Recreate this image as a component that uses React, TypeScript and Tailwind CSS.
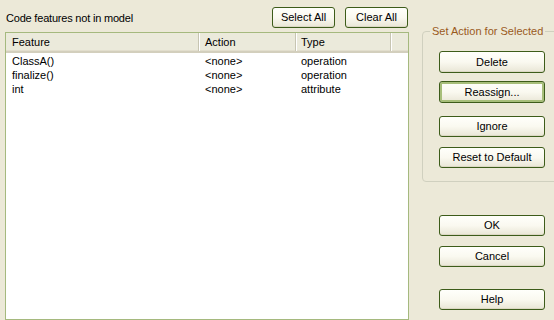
import React from "react";

function XpButton({
  label,
  className = "",
  focused = false,
}: {
  label: string;
  className?: string;
  focused?: boolean;
}) {
  return (
    <button
      className={
        "shrink-0 flex items-center justify-center rounded-[3px] border border-[#3D5C1A] bg-gradient-to-b from-[#FFFFFB] via-[#FAF9F0] to-[#E9E6D6] text-black leading-none " +
        (focused ? "shadow-[inset_0_0_0_2px_#A7BE7A] " : "shadow-[inset_0_-1px_0_#DCD8C4] ") +
        className
      }
    >
      {label}
    </button>
  );
}

const rows = [
  { f: "ClassA()", a: "<none>", t: "operation" },
  { f: "finalize()", a: "<none>", t: "operation" },
  { f: "int", a: "<none>", t: "attribute" },
];

export default function App() {
  return (
    <div className="w-[554px] h-[320px] overflow-hidden bg-[#ECE9D8] flex font-['Liberation_Sans',Arial,sans-serif] text-[11px] text-black">
      {/* Left column */}
      <div className="w-[409px] shrink-0 pl-[5px] flex flex-col">
        <div className="h-[32px] flex items-start">
          <span className="mt-[12px] ml-[1px] leading-[13px] tracking-[-0.2px]">Code features not in model</span>
          <div className="ml-auto flex gap-[10px] mt-[7px] mr-[1px]">
            <XpButton label="Select All" className="w-[63px] h-[21px]" />
            <XpButton label="Clear All" className="w-[63px] h-[21px]" />
          </div>
        </div>
        <div className="flex-1 border border-[#A5B97E] bg-white flex flex-col">
          <div className="h-[20px] flex bg-[#EBEADB] border-b-[2px] border-[#D3CFBD] shadow-[inset_0_-1px_0_#E2DECD]">
            <div className="w-[193px] pl-[6px] flex items-center border-r border-[#C7C5B2]">Feature</div>
            <div className="w-[97px] pl-[5px] flex items-center border-r border-[#C7C5B2] border-l border-l-white">Action</div>
            <div className="w-[95px] pl-[4px] flex items-center border-r border-[#C7C5B2] border-l border-l-white">Type</div>
            <div className="flex-1 border-l border-l-white"></div>
          </div>
          <div className="pt-[1px]">
            {rows.map((r) => (
              <div key={r.f} className="h-[14px] flex items-center leading-[14px]">
                <div className="w-[193px] pl-[6px]">{r.f}</div>
                <div className="w-[97px] pl-[6px]">{r.a}</div>
                <div className="w-[95px] pl-[5px]">{r.t}</div>
              </div>
            ))}
          </div>
        </div>
      </div>

      {/* Right column */}
      <div className="ml-[13px] shrink-0 flex flex-col pt-[31px]">
        <div className="relative w-[140px] h-[151px] border border-[#D0D0BF] rounded-[4px] flex flex-col pl-[16px] pt-[19px]">
          <span className="absolute -top-[8px] left-[7px] px-[2px] bg-[#ECE9D8] text-[#9A5A1C] leading-[14px]">
            Set Action for Selected
          </span>
          <XpButton label="Delete" className="w-[106px] h-[22px]" />
          <XpButton label="Reassign..." focused className="w-[106px] h-[22px] mt-[8px]" />
          <XpButton label="Ignore" className="w-[106px] h-[21px] mt-[13px]" />
          <XpButton label="Reset to Default" className="w-[106px] h-[21px] mt-[10px]" />
        </div>
        <div className="pl-[17px] flex flex-col">
          <XpButton label="OK" className="w-[106px] h-[21px] mt-[33px]" />
          <XpButton label="Cancel" className="w-[106px] h-[21px] mt-[10px]" />
          <XpButton label="Help" className="w-[106px] h-[21px] mt-[22px]" />
        </div>
      </div>
    </div>
  );
}
